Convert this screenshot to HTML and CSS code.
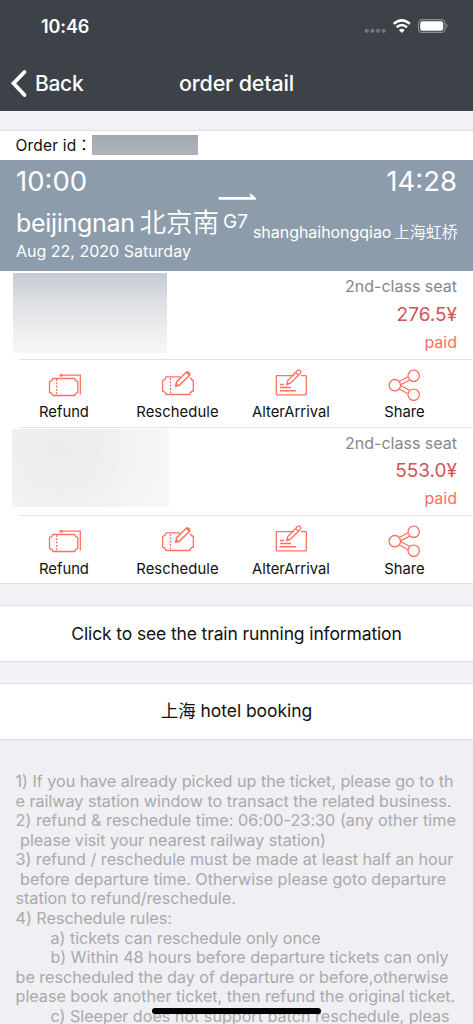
FILE: index.html
```html
<!DOCTYPE html>
<html lang="en">
<head>
<meta charset="utf-8">
<title>order detail</title>
<link rel="stylesheet" href="styles.css">
</head>
<body>
<svg width="0" height="0" class="defs">
  <symbol id="refund" viewBox="47 368 34 34">
    <path d="M53 378.500H74.500Q75 380.500 77.800 381.500V392.300Q75 393 74.500 395.500H53Q52.500 393 49.500 392.300V381.500Q52.500 380.500 53 378.500Z"/>
    <path d="M56.700 379V395" stroke-dasharray="2 1.300"/>
    <path d="M60.500 375.200H80.300V394.500"/>
    <circle cx="61" cy="375.200" r="1.500" fill="#ff7163" stroke="none"/>
  </symbol>
  <symbol id="reschedule" viewBox="160 368 34 34">
    <path d="M180 376.800H166.200Q165.500 379.500 162.600 380.500V391Q165.500 391.800 166.200 394.500H189.700Q190.300 391.800 193.300 391V380.500Q190.800 379.800 190.300 377.500"/>
    <path d="M170.500 378V394.500" stroke-dasharray="2 1.300"/>
    <path stroke-width="1.500" d="M175.800 386.200L176.600 381.700L186.200 372.300Q188 371.500 189.200 373Q190.300 374.500 188.800 376L179.300 385.300Z"/>
    <path d="M186.500 372L189.400 375M176 386L177.300 383.500" stroke-width="1.900"/>
  </symbol>
  <symbol id="alter" viewBox="274 368 34 34">
    <path d="M294 375.700H277Q276.300 375.700 276.300 376.500V394Q276.300 394.800 277 394.800H305.500Q306.300 394.800 306.300 394V376.500Q306.300 375.700 305.500 375.700H300.800"/>
    <path d="M286.700 384.700L287.700 380.500L297.200 370.700Q299 369 300.500 371Q301.200 372.300 300.200 373.500L290.500 383.200ZM295.600 372.400L298.600 375.200M287 384.500L288 382.500"/>
    <path d="M280 384.500H284M280 387.500H291M280 390.700H296" stroke-width="1.500"/>
  </symbol>
  <symbol id="share" viewBox="387.500 368 34 34">
    <circle cx="395.300" cy="385.200" r="5.700"/>
    <circle cx="414.200" cy="375.800" r="5.700"/>
    <circle cx="414.200" cy="394.800" r="5.700"/>
    <path d="M399.700 381.500L408.500 376.800M400.900 384.800L410.500 380M400.900 385.500L410.500 390.500M399.700 389L408.500 393.800"/>
  </symbol>
</svg>

<main class="screen">
  <header class="header">
    <div class="status">
      <span class="clock">10:46</span>
      <svg class="status-icons" width="86" height="18" viewBox="362 18 86 18">
        <g fill="#72777d"><circle cx="366.700" cy="30.800" r="2.100"/><circle cx="372.400" cy="30.800" r="2.100"/><circle cx="378" cy="30.800" r="2.100"/><circle cx="383.700" cy="30.800" r="2.100"/></g>
        <g fill="none" stroke="#fff" stroke-width="2.500"><path d="M393.700 23.900Q401.800 16.900 409.900 23.900"/><path d="M396.600 27.200Q401.800 22.700 407 27.200"/></g>
        <path fill="#fff" d="M401.800 32.900L398.900 29.900Q401.800 27.400 404.700 29.900Z"/>
        <rect x="418.500" y="19.600" width="26.500" height="12.800" rx="3.700" fill="none" stroke="#8b9094" stroke-width="1.200"/>
        <rect x="420.200" y="21.200" width="23" height="9.600" rx="2.200" fill="#fff"/>
        <path d="M446.400 23.800Q449 26 446.400 28.200Z" fill="#8b9094"/>
      </svg>
    </div>
    <nav class="nav">
      <span class="back"><svg width="18" height="30" viewBox="0 0 18 30"><path d="M14.500 4L3.500 15.300L14.500 27" fill="none" stroke="#fff" stroke-width="3.800" stroke-linecap="round"/></svg><span class="back-label">Back</span></span>
      <h1 class="title">order detail</h1>
      <span></span>
    </nav>
  </header>

  <section class="order">
    <div class="order-id"><span class="order-label">Order id<span class="colon">：</span></span><span class="redacted-id"></span></div>
    <div class="trip">
      <div class="times"><span>10:00</span><span>14:28</span></div>
      <div class="stations">
        <span class="from">beijingnan <span class="zh-from">北京南</span></span>
        <span class="train">
          <svg width="40" height="8" viewBox="0 0 40 8"><path d="M.6 4H33L31.700 1.800Q31.500.3 32.900.7L37.900 5V6.700H.6Z" fill="#fff"/></svg>
          <span class="number">G7</span>
        </span>
        <span class="to">shanghaihongqiao <span class="zh-to">上海虹桥</span></span>
      </div>
      <div class="date">Aug 22, 2020 Saturday</div>
    </div>

    <article class="ticket">
      <div class="passenger">
        <div class="redacted blue-fade"></div>
        <div class="fare"><span class="seat">2nd-class seat</span><span class="price">276.5¥</span><span class="paid">paid</span></div>
      </div>
      <div class="actions">
        <div class="action"><svg><use href="#refund"/></svg><span>Refund</span></div>
        <div class="action"><svg><use href="#reschedule"/></svg><span class="t-resch">Reschedule</span></div>
        <div class="action"><svg><use href="#alter"/></svg><span>AlterArrival</span></div>
        <div class="action"><svg><use href="#share"/></svg><span>Share</span></div>
      </div>
    </article>
    <article class="ticket second">
      <div class="passenger">
        <div class="redacted gray-fade"></div>
        <div class="fare"><span class="seat">2nd-class seat</span><span class="price">553.0¥</span><span class="paid">paid</span></div>
      </div>
      <div class="actions">
        <div class="action"><svg><use href="#refund"/></svg><span>Refund</span></div>
        <div class="action"><svg><use href="#reschedule"/></svg><span class="t-resch">Reschedule</span></div>
        <div class="action"><svg><use href="#alter"/></svg><span>AlterArrival</span></div>
        <div class="action"><svg><use href="#share"/></svg><span>Share</span></div>
      </div>
    </article>
  </section>

  <div class="link-row t-info">Click to see the train running information</div>
  <div class="link-row t-hotel">上海 hotel booking</div>

  <section class="notes">
    <div>1) If you have already picked up the ticket, please go to th</div>
    <div>e railway station window to transact the related business.</div>
    <div class="wide">2) refund &amp; reschedule time: 06:00-23:30 (any other time</div>
    <div> please visit your nearest railway station)</div>
    <div>3) refund / reschedule must be made at least half an hour</div>
    <div> before departure time. Otherwise please goto departure</div>
    <div>station to refund/reschedule.</div>
    <div>4) Reschedule rules:</div>
    <div class="sub">a) tickets can reschedule only once</div>
    <div class="sub">b) Within 48 hours before departure tickets can only</div>
    <div>be rescheduled the day of departure or before,otherwise</div>
    <div>please book another ticket, then refund the original ticket.</div>
    <div class="sub">c) Sleeper does not support batch reschedule, pleas</div>
  </section>
  <div class="home-bar"></div>
</main>
</body>
</html>
```
FILE: styles.css
```css
* { box-sizing: border-box; }
body { margin: 0; background: #efeff4; font-family: Inter, "Noto Sans CJK SC", sans-serif; color: #111; }
.defs { position: absolute; }
.screen { position: relative; width: 473px; height: 1024px; overflow: hidden; white-space: nowrap; background: linear-gradient(#f2f1f6 739px, #efeff4 739px); }
.header { height: 111px; background: #3c4248; color: #fff; margin-bottom: 19px; }
.status { height: 54px; padding: 18px 25px 0 41px; display: flex; justify-content: space-between; }
.clock { font-size: 18px; line-height: 18px; font-weight: 600; letter-spacing: -.1px; }
.nav { height: 57px; padding: 1px 10px 0 10px; display: grid; grid-template-columns: 1fr auto 1fr; align-items: center; }
.back { display: flex; align-items: center; gap: 7px; }
.back-label { font-size: 21px; font-weight: 500; letter-spacing: -.3px; }
.title { margin: 0; font-size: 21.500px; font-weight: 550; letter-spacing: -.2px; }

.order { height: 454px; background: #fff; border-top: 1px solid #dedee3; border-bottom: 1px solid #dedee3; margin-bottom: 21px; }
.order-id { height: 29px; padding-left: 15.500px; display: flex; align-items: center; font-size: 15.500px; letter-spacing: .18px; line-height: 20px; }
.order-label { width: 76.500px; height: 20px; }
.colon { font-family: "Noto Sans CJK TC", sans-serif; line-height: 1; }
.redacted-id { width: 106px; height: 20px; background: linear-gradient(#a2a9b1, #adb4bc); margin-top: -1px; }
.trip { height: 111px; background: #8d9cab; color: #fff; padding: 4px 16px 0; }
.times { display: flex; justify-content: space-between; font-size: 27.500px; line-height: 34px; }
.stations { height: 43px; display: flex; align-items: flex-start; }
.from { width: 204px; font-size: 25px; line-height: 30px; padding-top: 8px; letter-spacing: -.3px; }
.zh-from { font-family: "Noto Sans CJK SC", sans-serif; font-size: 26.500px; font-weight: 350; margin-left: -2px; letter-spacing: 0; }
.train { width: 33px; display: flex; flex-direction: column; align-items: flex-start; }
.train svg { margin: -5px 0 0 -1px; flex: none; }
.number { font-size: 19px; line-height: 20px; margin: 11px 0 0 4px; }
.to { font-size: 16px; line-height: 24px; padding-top: 21px; margin-left: 1px; letter-spacing: -.04px; }
.zh-to { font-family: "Noto Sans CJK SC", sans-serif; font-weight: 350; margin-left: -2px; }
.date { font-size: 16px; line-height: 20px; }

.ticket { height: 157px; }
.passenger { height: 88px; display: flex; justify-content: space-between; padding: 2px 16px 0 13px; }
.redacted { width: 154px; height: 80px; }
.blue-fade { background: linear-gradient(#c3cad3, #dddfe3 35%, #ebebed 65%, #f7f7f7); }
.gray-fade { width: 157px; height: 78px; background: radial-gradient(circle at 30% 25%, #ebebeb, #f8f8f8); margin-left: -1px; }
.fare { display: flex; flex-direction: column; align-items: flex-end; }
.seat { color: #86868a; font-size: 16px; line-height: 27px; }
.price { color: #cf5458; font-size: 19px; line-height: 29px; }
.paid { color: #fa7163; font-size: 16px; line-height: 27px; }
.actions { height: 69px; margin-left: 19px; border-top: 1px solid #e3e3e4; border-bottom: 1px solid #e3e3e4; padding-top: 8px; display: grid; grid-template-columns: repeat(4, 113.500px); }
.action { margin-left: -11.800px; margin-right: 11.800px; display: flex; flex-direction: column; align-items: center; font-size: 14.800px; line-height: 20px; }
.action svg { width: 34px; height: 34px; fill: none; stroke: #ff7163; stroke-width: 1.300; flex: none; }
.t-resch { letter-spacing: .08px; }
.second { height: 156px; }
.second .passenger { height: 87px; padding-top: 1px; }
.second .seat { padding-top: 1px; line-height: 26px; }
.second .actions { border-bottom: 0; }
.second .action span { padding-top: 1px; }

.link-row { height: 57px; background: #fff; border-top: 1px solid #e1e1e5; border-bottom: 1px solid #e1e1e5; margin-bottom: 21px; display: flex; justify-content: center; align-items: center; font-size: 17.500px; }
.t-info { letter-spacing: -.13px; }
.t-hotel { letter-spacing: -.06px; padding-bottom: 4px; }
.notes { padding: 11px 15.500px 0; color: #aaa; font-size: 16.200px; line-height: 19.560px; letter-spacing: -.03px; }
.notes div { white-space: pre; }
.wide { letter-spacing: .03px; }
.sub { padding-left: 35px; }
.home-bar { position: absolute; left: 152px; top: 1008px; width: 169px; height: 6px; border-radius: 3px; background: #000; }
```
